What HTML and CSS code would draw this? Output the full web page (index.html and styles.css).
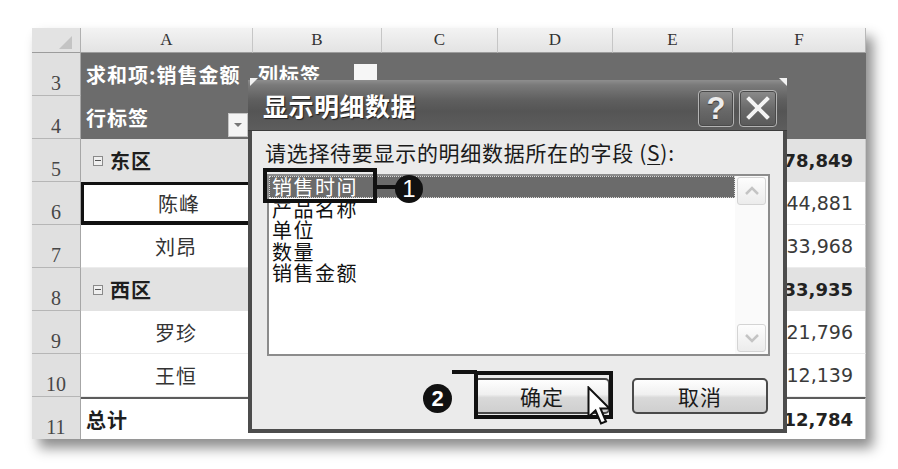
FILE: index.html
```html
<!DOCTYPE html>
<html lang="zh-CN">
<head>
<meta charset="utf-8">
<title>显示明细数据</title>
<link rel="stylesheet" href="styles.css">
</head>
<body>
<div class="stage">
  <div class="sheet">
    <div class="corner"></div>
    <div class="ch">A</div>
    <div class="ch">B</div>
    <div class="ch">C</div>
    <div class="ch">D</div>
    <div class="ch">E</div>
    <div class="ch ch-last">F</div>

    <div class="rh">3</div>
    <div class="pv pv-a">求和项:销售金额</div>
    <div class="pv pv-rest">列标签<span class="dd-white"></span></div>

    <div class="rh">4</div>
    <div class="pv pv-a pv-row">行标签<span class="dd-btn"></span></div>
    <div class="pv pv-rest"></div>

    <div class="rh">5</div>
    <div class="c-a grp"><span class="minus"></span>东区</div>
    <div class="c-mid grp"></div>
    <div class="c-f grp">178,849</div>

    <div class="rh">6</div>
    <div class="c-a item sel">陈峰</div>
    <div class="c-mid item"></div>
    <div class="c-f item">144,881</div>

    <div class="rh">7</div>
    <div class="c-a item">刘昂</div>
    <div class="c-mid item"></div>
    <div class="c-f item">133,968</div>

    <div class="rh">8</div>
    <div class="c-a grp"><span class="minus"></span>西区</div>
    <div class="c-mid grp"></div>
    <div class="c-f grp">133,935</div>

    <div class="rh">9</div>
    <div class="c-a item">罗珍</div>
    <div class="c-mid item"></div>
    <div class="c-f item">121,796</div>

    <div class="rh">10</div>
    <div class="c-a item">王恒</div>
    <div class="c-mid item"></div>
    <div class="c-f item">112,139</div>

    <div class="rh rh-last">11</div>
    <div class="c-a total">总计</div>
    <div class="c-mid total"></div>
    <div class="c-f total">312,784</div>
  </div>
</div>

<div class="dialog">
  <span class="nub nub-l"></span>
  <span class="nub nub-r"></span>
  <div class="titlebar">
    <span class="title">显示明细数据</span>
    <div class="tb-btns">
      <span class="tb-btn help">?</span>
      <span class="tb-btn close">
        <svg width="26" height="26" viewBox="0 0 26 26"><path d="M4 4 L22 22 M22 4 L4 22" stroke="#f4f4f4" stroke-width="4" stroke-linecap="square"/></svg>
      </span>
    </div>
  </div>
  <div class="dbody">
    <div class="prompt">请选择待要显示的明细数据所在的字段 (<u>S</u>):</div>
    <div class="listbox">
      <ul class="items">
        <li class="selected">销售时间</li>
        <li>产品名称</li>
        <li>单位</li>
        <li>数量</li>
        <li>销售金额</li>
      </ul>
      <div class="scrollbar">
        <span class="sb-btn">
          <svg width="16" height="10" viewBox="0 0 16 10"><path d="M2 8 L8 2 L14 8" fill="none" stroke="#c4c4c4" stroke-width="2.5"/></svg>
        </span>
        <span class="sb-btn">
          <svg width="16" height="10" viewBox="0 0 16 10"><path d="M2 2 L8 8 L14 2" fill="none" stroke="#c4c4c4" stroke-width="2.5"/></svg>
        </span>
      </div>
    </div>
    <div class="buttons">
      <button class="btn">确定</button>
      <button class="btn">取消</button>
    </div>
  </div>
</div>

<div class="callout-box box1"></div>
<div class="leader leader1"></div>
<div class="badge badge1">1</div>

<div class="leader leader2"></div>
<div class="callout-box box2"></div>
<div class="badge badge2">2</div>

<svg class="cursor" width="26" height="40" viewBox="0 0 26 40">
  <path d="M1.5 1.5 L1.5 31 L8.5 24.5 L14 37.5 L19 35.5 L13.5 22.5 L22.5 22.5 Z" fill="#fff" stroke="#111" stroke-width="2" stroke-linejoin="miter"/>
</svg>
</body>
</html>
```

FILE: styles.css
```css
* { box-sizing: border-box; }
html, body { margin: 0; padding: 0; background: #fff; }
body {
  width: 898px;
  height: 469px;
  overflow: hidden;
  position: relative;
  font-family: "Noto Sans CJK SC", "Noto Sans", sans-serif;
}

.stage { padding: 28px 0 0 32px; }

.sheet {
  display: grid;
  grid-template-columns: 49px 172px 129px 116px 115px 120px 133px;
  grid-template-rows: 25px repeat(8, 43px) 42px;
  width: 834px;
  background: #fff;
  box-shadow: 7px 9px 12px rgba(0, 0, 0, 0.45);
}

/* headers */
.corner {
  position: relative;
  background: #e3e3e3;
  border-right: 1px solid #b0b0b0;
  border-bottom: 1px solid #9c9c9c;
}
.corner::after {
  content: "";
  position: absolute;
  right: 8px;
  bottom: 3px;
  width: 0;
  height: 0;
  border-left: 13px solid transparent;
  border-bottom: 13px solid #c4c4c4;
}
.ch {
  display: flex;
  align-items: center;
  justify-content: center;
  background: linear-gradient(#f3f3f3, #e3e3e3);
  border-right: 1px solid #c6c6c6;
  border-bottom: 1px solid #9c9c9c;
  font: 17px "Liberation Serif", serif;
  color: #333;
}
.ch-last { border-right: 1px solid #b8b8b8; }
.rh {
  display: flex;
  align-items: flex-end;
  justify-content: center;
  padding-bottom: 2px;
  background: #e0e0e0;
  border-right: 1px solid #a6a6a6;
  border-bottom: 1px solid #b6b6b6;
  font: 20px/20px "Liberation Serif", serif;
  color: #474747;
}
.rh-last { border-bottom: 0; }

/* pivot header */
.pv {
  display: flex;
  align-items: center;
  background: #6c6c6c;
  color: #fff;
  font-weight: 700;
  font-size: 20px;
  letter-spacing: 1px;
  padding-left: 5px;
  white-space: nowrap;
}
.pv-rest { grid-column: span 5; }
.pv-row { position: relative; }
.dd-white {
  display: inline-block;
  width: 23px;
  height: 22px;
  margin-left: 33px;
  background: #f6f6f6;
}
.dd-btn {
  margin-left: auto;
  align-self: flex-end;
  margin-bottom: 2px;
  margin-right: 5px;
  width: 20px;
  height: 24px;
  background: #f4f4f4;
  border: 1px solid #c4c4c4;
  display: flex;
  align-items: center;
  justify-content: center;
}
.dd-btn::after {
  content: "";
  width: 0;
  height: 0;
  border-left: 4px solid transparent;
  border-right: 4px solid transparent;
  border-top: 4px solid #777;
}

/* body cells */
.c-a {
  display: flex;
  align-items: center;
  font-size: 20px;
  letter-spacing: 1px;
  color: #2a2a2a;
  white-space: nowrap;
}
.c-mid { grid-column: span 4; }
.c-f {
  display: flex;
  align-items: center;
  justify-content: flex-end;
  padding-right: 12px;
  font-family: "DejaVu Sans", sans-serif;
  font-size: 19px;
  color: #3a3a3a;
  border-right: 1px solid #c8c8c8;
}

.grp { background: #e2e2e2; }
.c-a.grp { padding-left: 12px; font-weight: 700; color: #1e1e1e; }
.c-f.grp { font-weight: 700; font-size: 18px; color: #222; }

.item { background: #fff; border-bottom: 1px solid #ececec; }
.c-a.item { padding-left: 74px; color: #333; }

.total { background: #fff; border-top: 2px solid #5c5c5c; }
.c-a.total { padding-left: 5px; font-weight: 700; color: #1e1e1e; }
.c-f.total { font-weight: 700; font-size: 18px; color: #222; }

.sel {
  border: 3px solid #111;
  border-right: 0;
  border-bottom-width: 4px;
}

.minus {
  width: 10px;
  height: 10px;
  margin-right: 7px;
  border: 1px solid #8a8a8a;
  background: #efefef;
  display: flex;
  align-items: center;
  justify-content: center;
}
.minus::after {
  content: "";
  width: 6px;
  height: 1px;
  background: #555;
}

/* dialog */
.dialog {
  position: absolute;
  left: 248px;
  top: 80px;
  width: 539px;
  height: 353px;
  display: flex;
  flex-direction: column;
  background: #ebebeb;
  border: 4px solid #4c4c4c;
  border-top: 0;
}
.nub {
  position: absolute;
  top: -2px;
  width: 0;
  height: 0;
}
.nub-l {
  left: -2px;
  border-top: 8px solid #f2f2f2;
  border-right: 8px solid transparent;
}
.nub-r {
  right: -4px;
  border-top: 8px solid #f2f2f2;
  border-left: 8px solid transparent;
}
.titlebar {
  height: 51px;
  margin: 0 -4px;
  display: flex;
  align-items: center;
  justify-content: space-between;
  padding: 0 10px 0 15px;
  background: linear-gradient(#8e8e8e 0, #7a7a7a 10%, #5f5f5f 40%, #555 62%, #5d5d5d 100%);
  border-bottom: 1px solid #3c3c3c;
}
.title {
  font-size: 25px;
  font-weight: 700;
  color: #fff;
  text-shadow: 1px 1px 1px #1c1c1c;
  letter-spacing: 0.5px;
}
.tb-btns {
  display: flex;
  gap: 5px;
  margin-top: 6px;
}
.tb-btn {
  display: flex;
  align-items: center;
  justify-content: center;
  height: 37px;
  border: 1px solid #b4b4b4;
  border-radius: 4px;
  background: linear-gradient(#8c8c8c, #6a6a6a 50%, #5a5a5a);
  box-shadow: inset 0 0 0 1px #4a4a4a;
}
.help {
  width: 36px;
  font: 700 31px/1 "Liberation Sans", sans-serif;
  color: #ececec;
  text-shadow: 0 1px 1px #333;
}
.close { width: 38px; }

.dbody {
  flex: 1;
  padding: 8px 13px 0 13px;
}
.prompt {
  font-size: 21px;
  line-height: 26px;
  letter-spacing: 0.7px;
  color: #1a1a1a;
  white-space: nowrap;
}
.prompt u { text-decoration-thickness: 1px; text-underline-offset: 3px; }

.listbox {
  display: flex;
  height: 182px;
  margin: 9px 0 0 2px;
  border: 2px solid #8c8c8c;
  background: #fff;
}
.items {
  flex: 1;
  margin: 0;
  padding: 0;
  list-style: none;
}
.items li {
  height: 21.5px;
  line-height: 21.5px;
  padding-left: 3px;
  font-size: 20px;
  letter-spacing: 1.5px;
  color: #111;
  white-space: nowrap;
}
.items li.selected {
  background: #6b6b6b;
  color: #fff;
  outline: 1px dotted #d8d8d8;
  outline-offset: -1px;
}
.scrollbar {
  width: 33px;
  padding: 1px 2px 2px 2px;
  display: flex;
  flex-direction: column;
  justify-content: space-between;
  background: #fafafa;
}
.sb-btn {
  height: 28px;
  display: flex;
  align-items: center;
  justify-content: center;
  border: 1px solid #d4d4d4;
  border-radius: 3px;
  background: linear-gradient(#fdfdfd, #ececec);
}

.buttons {
  display: flex;
  justify-content: flex-end;
  gap: 22px;
  margin-top: 22px;
  padding-right: 2px;
}
.btn {
  width: 136px;
  height: 36px;
  padding: 0;
  border: 2px solid #4a4a4a;
  border-radius: 5px;
  background: linear-gradient(#fefefe, #f0f0f0 45%, #d9d9d9 55%, #cfcfcf);
  font-family: "Noto Sans CJK SC", sans-serif;
  font-size: 21px;
  line-height: 30px;
  letter-spacing: 1px;
  color: #1a1a1a;
}

/* annotations */
.callout-box {
  position: absolute;
  border: 4px solid #111;
}
.box1 { left: 263px; top: 168px; width: 114px; height: 35px; }
.box2 { left: 474px; top: 371px; width: 139px; height: 48px; }
.leader {
  position: absolute;
  height: 4px;
  background: #111;
}
.leader1 { left: 376px; top: 185px; width: 22px; }
.leader2 { left: 452px; top: 370px; width: 25px; }
.badge {
  position: absolute;
  display: flex;
  align-items: center;
  justify-content: center;
  border-radius: 50%;
  background: #111;
  color: #fff;
  font: 700 22px/1 "Liberation Sans", sans-serif;
}
.badge1 { left: 395px; top: 175px; width: 28px; height: 28px; font-weight: 400; font-size: 24px; }
.badge2 { left: 423px; top: 384px; width: 29px; height: 29px; }
.cursor {
  position: absolute;
  left: 587px;
  top: 386px;
}
```
